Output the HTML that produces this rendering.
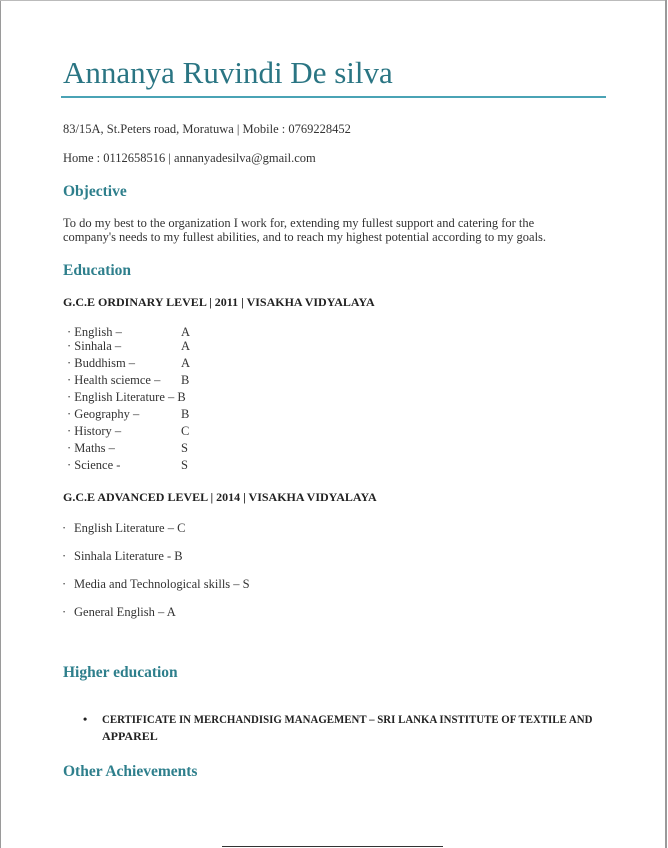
<!DOCTYPE html>
<html><head><meta charset="utf-8"><style>
html,body{margin:0;padding:0;background:#fff}
body{width:668px;height:848px;position:relative;overflow:hidden;font-family:"Liberation Serif",serif;color:#333}
.p{position:absolute;white-space:nowrap;font-size:12.5px;line-height:14px}
.h{position:absolute;white-space:nowrap;color:#2e7f8c;font-weight:bold;font-size:15.5px}
.b{position:absolute;white-space:nowrap;font-weight:bold;font-size:12px;color:#222}
</style></head><body>
<div style="position:absolute;left:0;top:0;width:1px;height:848px;background:#9a9a9a"></div>
<div style="position:absolute;left:0;top:0;width:667px;height:1px;background:#bbb"></div>
<div style="position:absolute;left:665px;top:0;width:2px;height:848px;background:#9a9a9a"></div>
<div style="position:absolute;left:63px;top:55px;font-size:31px;color:#2a7583;white-space:nowrap">Annanya Ruvindi De silva</div>
<div style="position:absolute;left:61px;top:96px;width:545px;height:2px;background:#4aa3b5"></div>
<div class="p" style="left:63px;top:122px">83/15A, St.Peters road, Moratuwa | Mobile : 0769228452</div>
<div class="p" style="left:63px;top:151px">Home : 0112658516 | annanyadesilva@gmail.com</div>
<div class="h" style="left:63px;top:183px">Objective</div>
<div class="p" style="left:63px;top:216px">To do my best to the organization I work for, extending my fullest support and catering for the</div>
<div class="p" style="left:63px;top:230px">company's needs to my fullest abilities, and to reach my highest potential according to my goals.</div>
<div class="h" style="left:63px;top:262px">Education</div>
<div class="b" style="left:63px;top:295px">G.C.E ORDINARY LEVEL | 2011 | VISAKHA VIDYALAYA</div>
<div class="p" style="left:67px;top:325px">· English –</div><div class="p" style="left:181px;top:325px">A</div>
<div class="p" style="left:67px;top:339px">· Sinhala –</div><div class="p" style="left:181px;top:339px">A</div>
<div class="p" style="left:67px;top:356px">· Buddhism –</div><div class="p" style="left:181px;top:356px">A</div>
<div class="p" style="left:67px;top:373px">· Health sciemce –</div><div class="p" style="left:181px;top:373px">B</div>
<div class="p" style="left:67px;top:390px">· English Literature – B</div>
<div class="p" style="left:67px;top:407px">· Geography –</div><div class="p" style="left:181px;top:407px">B</div>
<div class="p" style="left:67px;top:424px">· History –</div><div class="p" style="left:181px;top:424px">C</div>
<div class="p" style="left:67px;top:441px">· Maths –</div><div class="p" style="left:181px;top:441px">S</div>
<div class="p" style="left:67px;top:458px">· Science -</div><div class="p" style="left:181px;top:458px">S</div>
<div class="b" style="left:63px;top:490px">G.C.E ADVANCED LEVEL | 2014 | VISAKHA VIDYALAYA</div>
<div class="p" style="left:62px;top:521px">·</div><div class="p" style="left:74px;top:521px">English Literature – C</div>
<div class="p" style="left:62px;top:549px">·</div><div class="p" style="left:74px;top:549px">Sinhala Literature - B</div>
<div class="p" style="left:62px;top:577px">·</div><div class="p" style="left:74px;top:577px">Media and Technological skills – S</div>
<div class="p" style="left:62px;top:605px">·</div><div class="p" style="left:74px;top:605px">General English – A</div>
<div class="h" style="left:63px;top:664px">Higher education</div>
<div class="b" style="left:83px;top:712px">•</div>
<div class="b" style="left:102px;top:712px;transform:scaleX(0.905);transform-origin:0 0">CERTIFICATE IN MERCHANDISIG MANAGEMENT – SRI LANKA INSTITUTE OF TEXTILE AND</div>
<div class="b" style="left:102px;top:729px">APPAREL</div>
<div class="h" style="left:63px;top:763px">Other Achievements</div>
<div style="position:absolute;left:222px;top:846px;width:221px;height:1px;background:#333"></div>
</body></html>
